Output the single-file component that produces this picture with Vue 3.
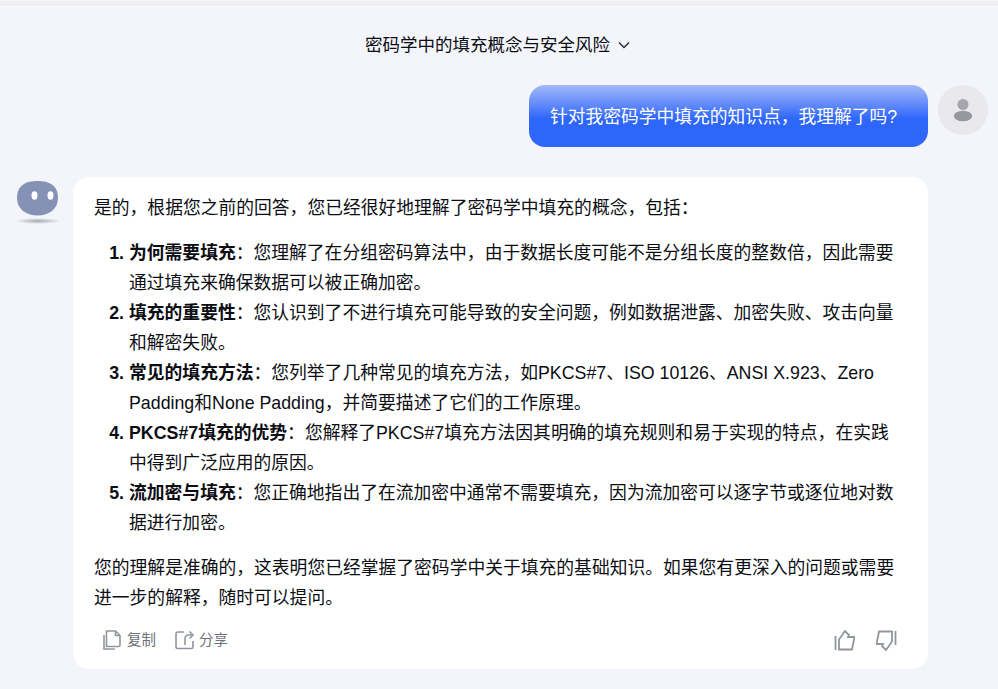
<script setup>
const items = [
  { title: '为何需要填充', text: '：您理解了在分组密码算法中，由于数据长度可能不是分组长度的整数倍，因此需要通过填充来确保数据可以被正确加密。' },
  { title: '填充的重要性', text: '：您认识到了不进行填充可能导致的安全问题，例如数据泄露、加密失败、攻击向量和解密失败。' },
  { title: '常见的填充方法', text: '：您列举了几种常见的填充方法，如PKCS#7、ISO 10126、ANSI X.923、Zero Padding和None Padding，并简要描述了它们的工作原理。' },
  { title: 'PKCS#7填充的优势', text: '：您解释了PKCS#7填充方法因其明确的填充规则和易于实现的特点，在实践中得到广泛应用的原因。' },
  { title: '流加密与填充', text: '：您正确地指出了在流加密中通常不需要填充，因为流加密可以逐字节或逐位地对数据进行加密。' }
]
</script>

<template>
  <div class="page">
    <div class="top-strip"></div>

    <header class="title-row">
      <span>密码学中的填充概念与安全风险</span>
      <svg class="chevron" width="12" height="8" viewBox="0 0 12 8" fill="none">
        <path d="M1 1.500 6 6.500l5-5" stroke="#2b2d33" stroke-width="1.500" />
      </svg>
    </header>

    <section class="user-row">
      <div class="user-bubble">针对我密码学中填充的知识点，我理解了吗?</div>
      <div class="user-avatar">
        <svg width="20" height="24" viewBox="0 0 20 24">
          <circle cx="10" cy="6.500" r="5.500" fill="#a5a5ad" />
          <ellipse cx="10" cy="18" rx="9.200" ry="5.200" fill="#97979f" />
        </svg>
      </div>
    </section>

    <section class="bot-row">
      <div class="bot-avatar">
        <svg width="41" height="44" viewBox="0 0 41 44">
          <defs>
            <radialGradient id="shadow">
              <stop offset="0" stop-color="#a9a9ac" />
              <stop offset="1" stop-color="#f3f5fb" />
            </radialGradient>
          </defs>
          <path d="M20.500 0C32 0 41 4 41 17c0 11-9 17.500-20.500 17.500S0 28 0 17C0 4 9 0 20.500 0Z" fill="#8592b6" />
          <ellipse cx="17.500" cy="14.500" rx="3" ry="4.200" fill="#fff" />
          <ellipse cx="33.500" cy="14.500" rx="3" ry="4.200" fill="#fff" />
          <ellipse cx="21" cy="40" rx="23" ry="3" fill="url(#shadow)" />
        </svg>
      </div>

      <article class="bot-card">
        <p class="para first">是的，根据您之前的回答，您已经很好地理解了密码学中填充的概念，包括：</p>
        <ol class="points">
          <li v-for="item in items" :key="item.title">
            <strong>{{ item.title }}</strong>{{ item.text }}
          </li>
        </ol>
        <p class="para">您的理解是准确的，这表明您已经掌握了密码学中关于填充的基础知识。如果您有更深入的问题或需要进一步的解释，随时可以提问。</p>

        <footer class="actions">
          <div class="actions-left">
            <span class="action">
              <svg width="20" height="20" viewBox="0 0 20 20" fill="none" stroke="#92969e" stroke-width="1.600">
                <path d="M3.500 1h9l4.500 4.500v9.500c0 1-.5 1.500-1.500 1.500h-12z" />
                <path d="M12.500 1v4.500h4.500" />
                <path d="M1 5v14h11" />
              </svg>
              <span>复制</span>
            </span>
            <span class="action">
              <svg width="20" height="20" viewBox="0 0 20 20" fill="none" stroke="#92969e" stroke-width="1.600">
                <path d="M9 2H3C1.800 2 1 2.800 1 4v13c0 .8.7 1.500 1.500 1.500h14c1 0 1.500-.5 1.500-1.500v-6" />
                <path d="M10 15V9c0-2.500 1-4 3.500-4h4" />
                <path d="M14.500 1.500 18 5l-3.500 3.500" />
              </svg>
              <span>分享</span>
            </span>
          </div>
          <div class="actions-right">
            <svg width="21" height="21" viewBox="0 0 21 21" fill="none" stroke="#92969e" stroke-width="1.800">
              <path d="M1.500 6v14" />
              <path d="M5 19.500V9.500l6-8.500 4 4-1 2h6.500L18 19.500z" />
            </svg>
            <svg width="21" height="21" viewBox="0 0 21 21" fill="none" stroke="#92969e" stroke-width="1.800">
              <g transform="rotate(180 10.500 10.500)">
                <path d="M1.500 6v14" />
                <path d="M5 19.500V9.500l6-8.500 4 4-1 2h6.500L18 19.500z" />
              </g>
            </svg>
          </div>
        </footer>
      </article>
    </section>
  </div>
</template>

<style>
html, body { background: #f3f5fb; }
</style>

<style scoped>
.page {
  height: 689px;
  overflow: hidden;
  box-sizing: border-box;
  background: #f3f5fb;
  color: #0b0d12;
  font-family: "Liberation Sans", "Noto Sans CJK SC", sans-serif;
  font-size: 17.5px;
  line-height: 30px;
}

.top-strip {
  height: 3px;
  margin-top: 1px;
  background: #f0f0f2;
  border-bottom: 1px solid #e9eaee;
}

.title-row {
  display: flex;
  justify-content: center;
  align-items: center;
  gap: 8px;
  height: 30px;
  margin-top: 25px;
  padding-right: 3px;
}

.user-row {
  display: flex;
  justify-content: flex-end;
  gap: 10px;
  margin-top: 25px;
  padding-right: 10px;
}

.user-bubble {
  height: 62px;
  box-sizing: border-box;
  padding: 17px 31px 15px 21px;
  border-radius: 16px;
  color: #fff;
  font-size: 17.75px;
  background: linear-gradient(180deg, #a4b9fb 0%, #2e66fa 55%, #2e66fa 100%);
}

.user-avatar {
  width: 50px;
  height: 50px;
  border-radius: 50%;
  background: #e8e8ed;
  display: flex;
  align-items: center;
  justify-content: center;
}

.bot-row {
  display: flex;
  margin-top: 30px;
  padding-left: 17px;
}

.bot-avatar {
  width: 56px;
  flex: none;
  padding-top: 4px;
}

.bot-card {
  width: 855px;
  height: 492px;
  box-sizing: border-box;
  padding: 16px 32px 0 21px;
  background: #fff;
  border-radius: 16px;
  font-size: 17.8px;
}

.para { margin: 0; }

.para.first { margin-bottom: 15px; }

.points {
  margin: 0 0 15px;
  padding: 0 0 0 35px;
}

.points strong { font-weight: 700; }

.points li::marker { font-weight: 700; }

.actions {
  display: flex;
  justify-content: space-between;
  align-items: center;
  margin: 12px -1px 0 0;
  padding: 0 0 0 9px;
}

.actions-left {
  display: flex;
  gap: 19px;
}

.action {
  display: flex;
  align-items: center;
  gap: 4px;
  font-size: 14.500px;
  color: #6d7178;
}

.actions-right {
  display: flex;
  gap: 21px;
}
</style>
